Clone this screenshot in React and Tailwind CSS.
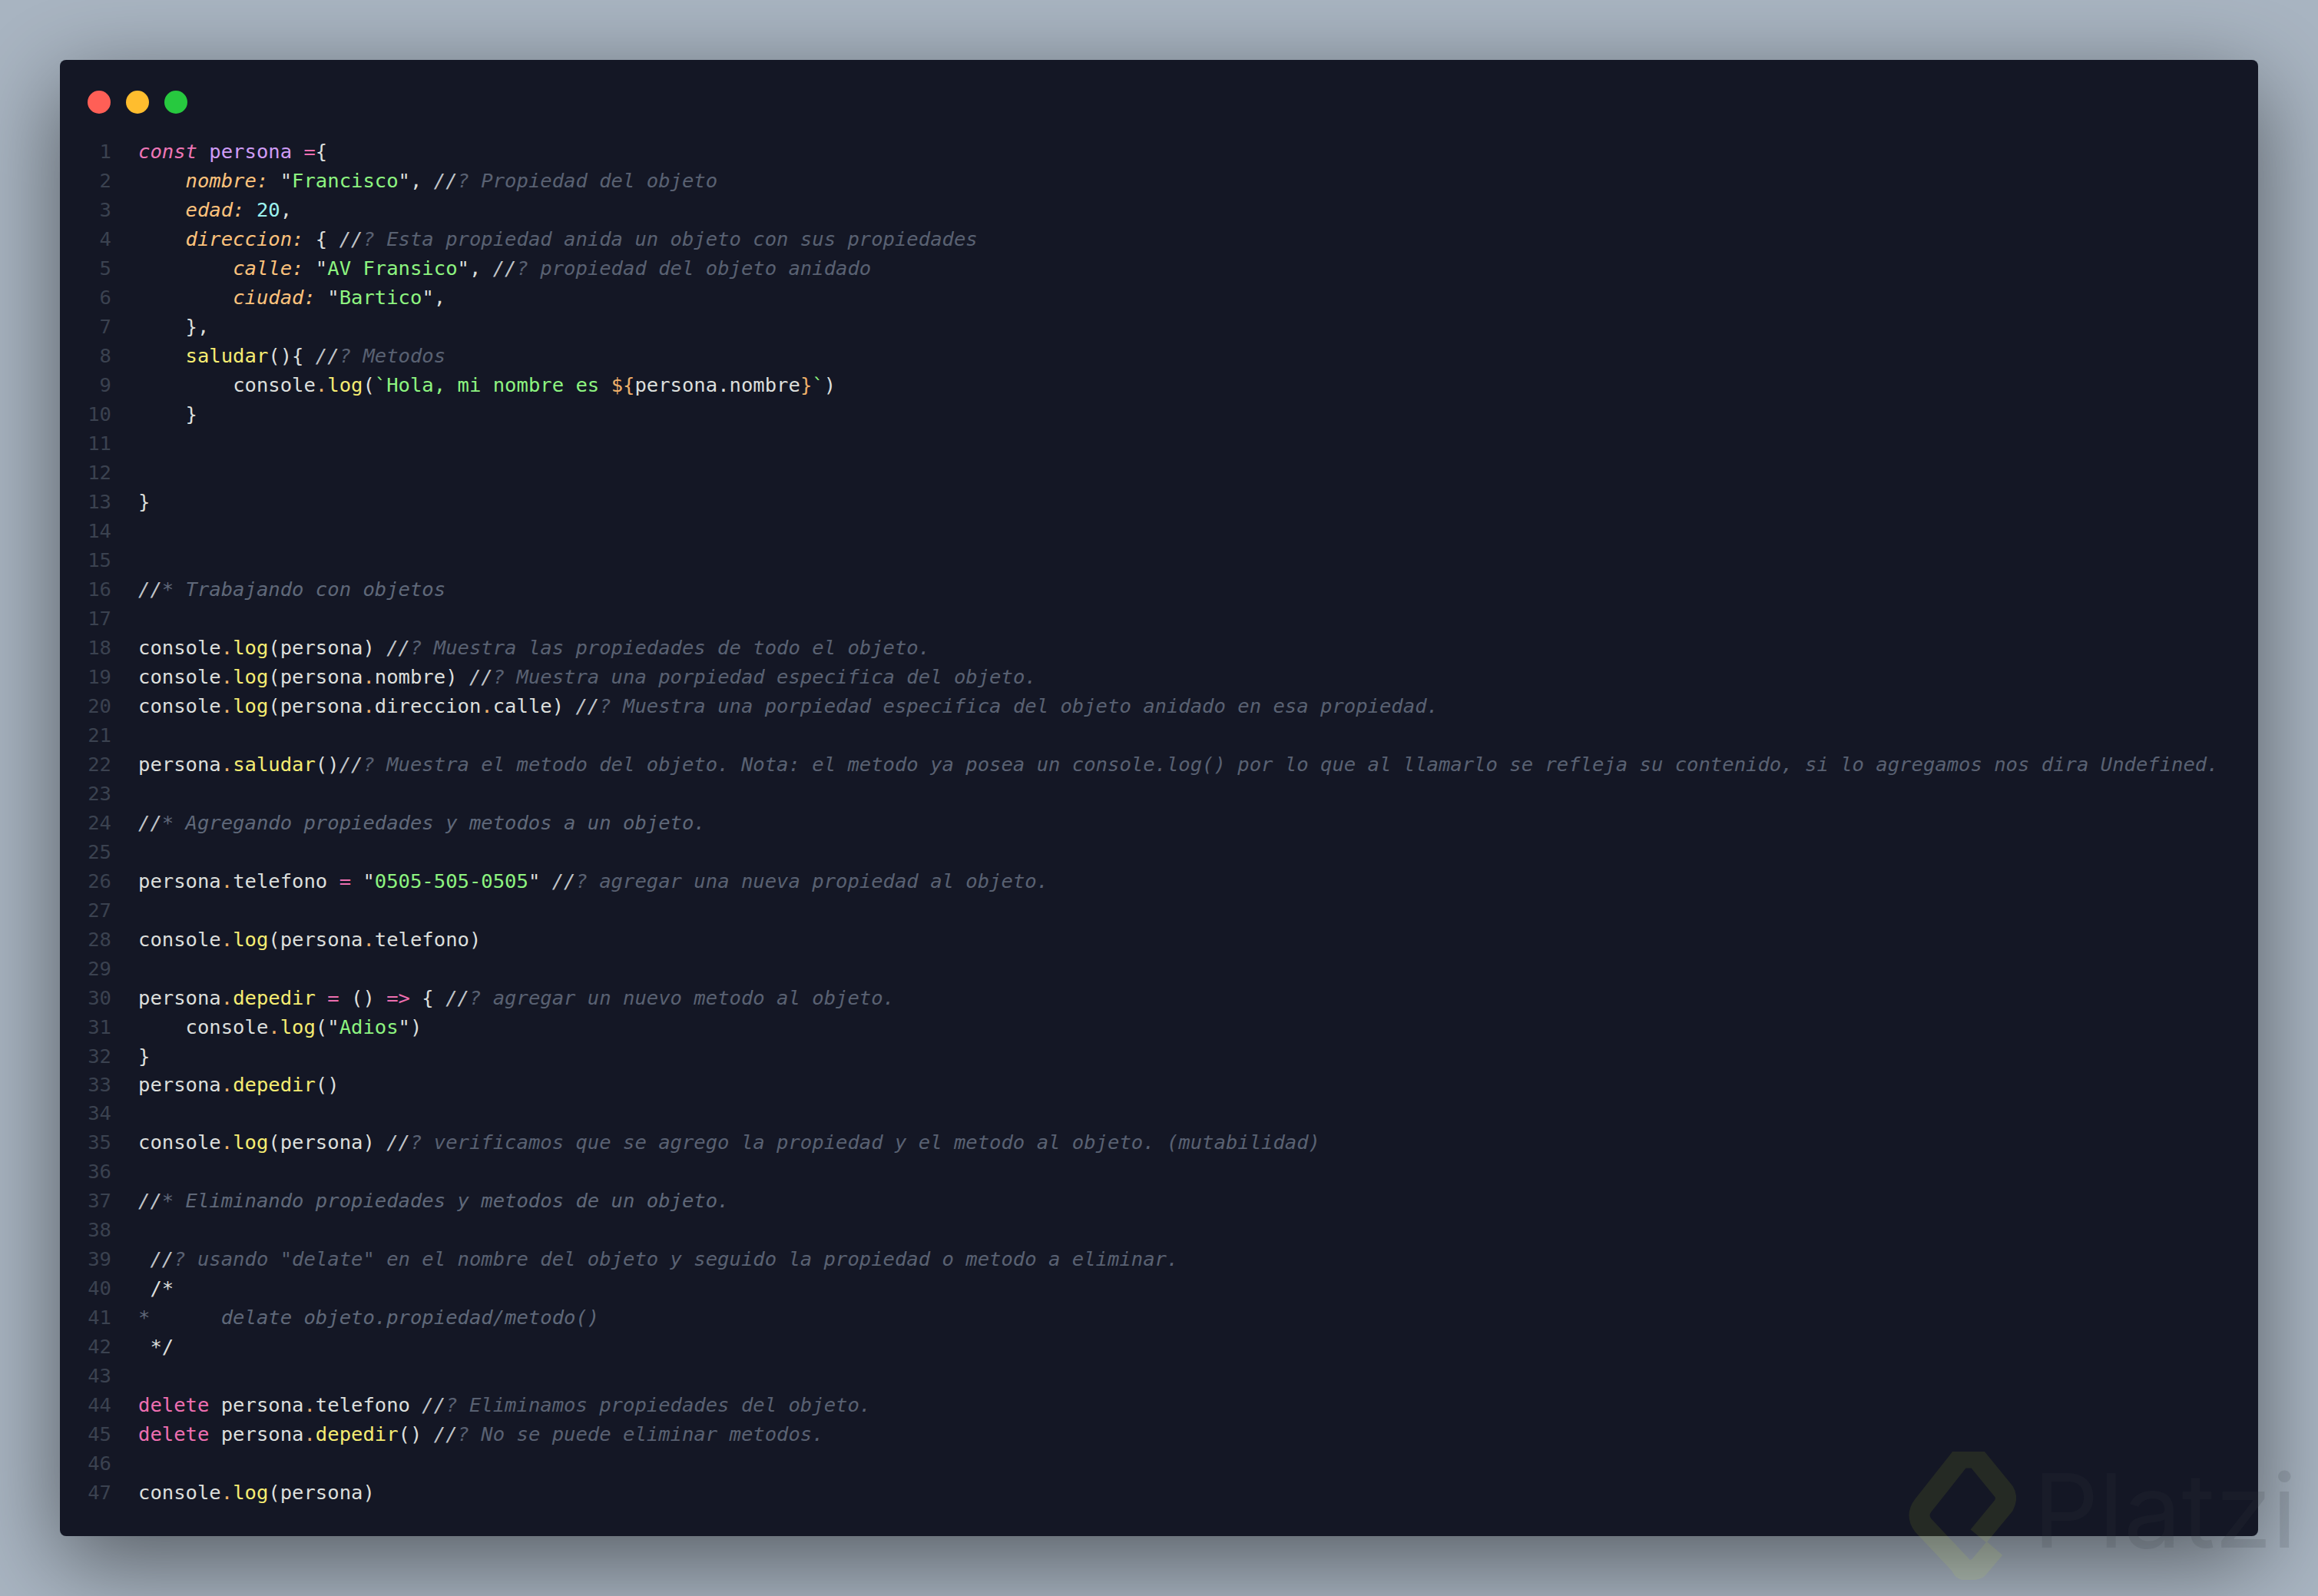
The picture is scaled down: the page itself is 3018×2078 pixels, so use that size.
const pl = 'text-[#dcdfdc]'
const kw = 'italic text-[#ee76b6]'
const op = 'text-[#ee6fb1]'
const vr = 'text-[#cf9cf5]'
const key = 'italic text-[#fcc27c]'
const str = 'text-[#8df480]'
const num = 'text-[#9cf2ee]'
const fn = 'text-[#f5ec72]'
const dot = 'text-[#eeb06a]'
const sl = 'italic text-[#c0c4c8]'
const cm = 'italic text-[#596172]'
const hd = 'italic text-[#5f6879]'
const blk = 'text-[#dcdfdc]'

const log = [[pl, 'console'], [dot, '.'], [fn, 'log'], [pl, '(']]
const note = (text) => [[sl, ' //'], [cm, '? ' + text]]

const lines = [
  [[kw, 'const'], [pl, ' '], [vr, 'persona'], [pl, ' '], [op, '='], [pl, '{']],
  [[pl, '    '], [key, 'nombre:'], [pl, ' "'], [str, 'Francisco'], [pl, '",'], ...note('Propiedad del objeto')],
  [[pl, '    '], [key, 'edad:'], [pl, ' '], [num, '20'], [pl, ',']],
  [[pl, '    '], [key, 'direccion:'], [pl, ' {'], ...note('Esta propiedad anida un objeto con sus propiedades')],
  [[pl, '        '], [key, 'calle:'], [pl, ' "'], [str, 'AV Fransico'], [pl, '",'], ...note('propiedad del objeto anidado')],
  [[pl, '        '], [key, 'ciudad:'], [pl, ' "'], [str, 'Bartico'], [pl, '",']],
  [[pl, '    },']],
  [[pl, '    '], [fn, 'saludar'], [pl, '(){'], ...note('Metodos')],
  [[pl, '        '], ...log, [str, '`Hola, mi nombre es '], [dot, '${'], [pl, 'persona.nombre'], [dot, '}'], [str, '`'], [pl, ')']],
  [[pl, '    }']],
  [],
  [],
  [[pl, '}']],
  [],
  [],
  [[sl, '//'], [hd, '* Trabajando con objetos']],
  [],
  [...log, [pl, 'persona)'], ...note('Muestra las propiedades de todo el objeto.')],
  [...log, [pl, 'persona'], [dot, '.'], [pl, 'nombre)'], ...note('Muestra una porpiedad especifica del objeto.')],
  [...log, [pl, 'persona'], [dot, '.'], [pl, 'direccion'], [dot, '.'], [pl, 'calle)'], ...note('Muestra una porpiedad especifica del objeto anidado en esa propiedad.')],
  [],
  [[pl, 'persona'], [dot, '.'], [fn, 'saludar'], [pl, '()'], [sl, '//'], [cm, '? Muestra el metodo del objeto. Nota: el metodo ya posea un console.log() por lo que al llamarlo se refleja su contenido, si lo agregamos nos dira Undefined.']],
  [],
  [[sl, '//'], [hd, '* Agregando propiedades y metodos a un objeto.']],
  [],
  [[pl, 'persona'], [dot, '.'], [pl, 'telefono '], [op, '='], [pl, ' "'], [str, '0505-505-0505'], [pl, '"'], ...note('agregar una nueva propiedad al objeto.')],
  [],
  [...log, [pl, 'persona'], [dot, '.'], [pl, 'telefono)']],
  [],
  [[pl, 'persona'], [dot, '.'], [fn, 'depedir'], [pl, ' '], [op, '='], [pl, ' () '], [op, '=>'], [pl, ' {'], ...note('agregar un nuevo metodo al objeto.')],
  [[pl, '    '], ...log, [pl, '"'], [str, 'Adios'], [pl, '")']],
  [[pl, '}']],
  [[pl, 'persona'], [dot, '.'], [fn, 'depedir'], [pl, '()']],
  [],
  [...log, [pl, 'persona)'], ...note('verificamos que se agrego la propiedad y el metodo al objeto. (mutabilidad)')],
  [],
  [[sl, '//'], [hd, '* Eliminando propiedades y metodos de un objeto.']],
  [],
  [[sl, ' //'], [cm, '? usando "delate" en el nombre del objeto y seguido la propiedad o metodo a eliminar.']],
  [[blk, ' /*']],
  [[hd, '*      delate objeto.propiedad/metodo()']],
  [[blk, ' */']],
  [],
  [[op, 'delete'], [pl, ' persona'], [dot, '.'], [pl, 'telefono'], ...note('Eliminamos propiedades del objeto.')],
  [[op, 'delete'], [pl, ' persona'], [dot, '.'], [fn, 'depedir'], [pl, '()'], ...note('No se puede eliminar metodos.')],
  [],
  [...log, [pl, 'persona)']],
]

function Watermark() {
  return (
    <div className="pointer-events-none absolute left-[2485px] top-[1890px] flex items-start">
      <svg width="142" height="167" viewBox="0 0 142 167" fill="none" className="opacity-[0.08]">
        <path
          d="M91 110 L124 70 Q129 60 124 52 L88 8 Q71 8 68 8 L19 70 Q9 83 19 96 L68 148 Q71 159 90 152 L112 126"
          stroke="#e8ff20"
          strokeWidth="27"
          strokeLinejoin="round"
        />
      </svg>
      <span className="ml-[20px] mt-[10px] font-['Inter',sans-serif] text-[134px] leading-[133px] font-normal text-[#363a44]/15">
        Platzi
      </span>
    </div>
  )
}

export default function App() {
  return (
    <div className="relative h-[2078px] w-[3018px] overflow-hidden bg-[#a9b5c2] p-[78px]">
      <div className="h-[1922px] w-[2862px] rounded-[8px] bg-[#141725] px-[36px] pt-[40px] shadow-[0_32px_120px_rgba(0,0,0,0.5)]">
        <div className="flex gap-[20px]">
          <span className="h-[30px] w-[30px] rounded-full bg-[#ff5f56]" />
          <span className="h-[30px] w-[30px] rounded-full bg-[#ffbd2e]" />
          <span className="h-[30px] w-[30px] rounded-full bg-[#27c93f]" />
        </div>
        <div className="mt-[30px] font-['DejaVu_Sans_Mono',monospace] text-[25.57px] leading-[38px]">
          {lines.map((tokens, i) => (
            <div key={i} className={i === 31 || i === 32 ? 'flex h-[37px] gap-[35px] whitespace-pre' : 'flex h-[38px] gap-[35px] whitespace-pre'}>
              <span className="w-[31px] text-right text-[#3b4250]">{i + 1}</span>
              <code className="font-['DejaVu_Sans_Mono',monospace]">
                {tokens.map(([cls, text], j) => (
                  <span key={j} className={cls}>{text}</span>
                ))}
              </code>
            </div>
          ))}
        </div>
      </div>
      <Watermark />
    </div>
  )
}
